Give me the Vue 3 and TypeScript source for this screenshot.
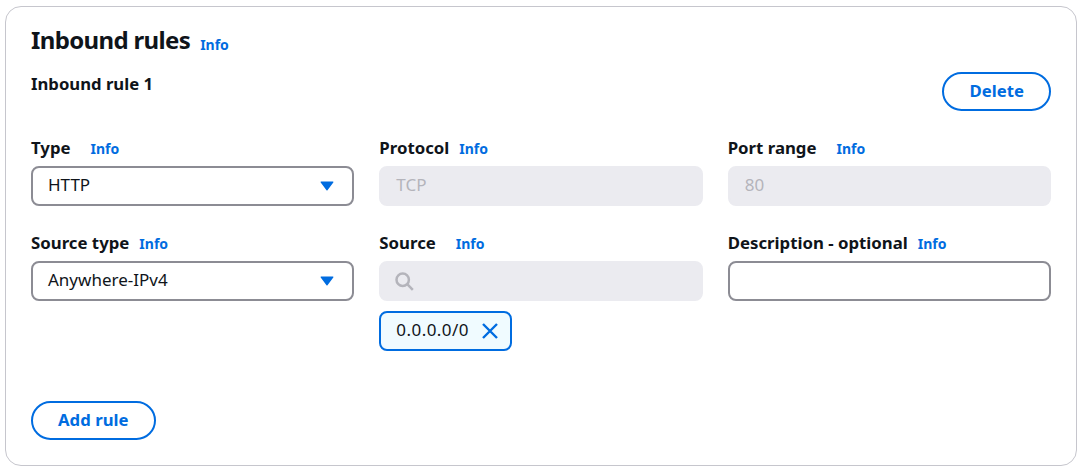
<script setup lang="ts">
// Second row of fields sits under the first, same grid
const infoLabel = 'Info';
</script>

<template>
  <div class="page">
    <section class="card">
      <header class="card-header">
        <h2 class="card-title">Inbound rules</h2>
        <a class="info-link">{{ infoLabel }}</a>
      </header>

      <div class="rule-header">
        <h3 class="rule-title">Inbound rule 1</h3>
        <button class="btn">Delete</button>
      </div>

      <div class="fields">
        <div class="field">
          <div class="field-label gap-wide"><span>Type</span><a class="info-link">{{ infoLabel }}</a></div>
          <div class="control select">
            <span class="value">HTTP</span>
            <svg class="caret" width="14" height="10" viewBox="0 0 14 10"><path d="M1.2 0.5h11.6a.6.6 0 0 1 .5 1L7.5 9.2a.6.6 0 0 1-1 0L.7 1.5a.6.6 0 0 1 .5-1z" fill="#006ce0" /></svg>
          </div>
        </div>
        <div class="field">
          <div class="field-label"><span>Protocol</span><a class="info-link">{{ infoLabel }}</a></div>
          <div class="control disabled"><span class="value">TCP</span></div>
        </div>
        <div class="field">
          <div class="field-label gap-wide"><span>Port range</span><a class="info-link">{{ infoLabel }}</a></div>
          <div class="control disabled"><span class="value">80</span></div>
        </div>

        <div class="field">
          <div class="field-label"><span>Source type</span><a class="info-link">{{ infoLabel }}</a></div>
          <div class="control select">
            <span class="value">Anywhere-IPv4</span>
            <svg class="caret" width="14" height="10" viewBox="0 0 14 10"><path d="M1.2 0.5h11.6a.6.6 0 0 1 .5 1L7.5 9.2a.6.6 0 0 1-1 0L.7 1.5a.6.6 0 0 1 .5-1z" fill="#006ce0" /></svg>
          </div>
        </div>
        <div class="field">
          <div class="field-label gap-wide"><span>Source</span><a class="info-link">{{ infoLabel }}</a></div>
          <div class="control disabled">
            <svg class="search-icon" width="20" height="20" viewBox="0 0 20 20" fill="none" stroke="#b4b4bb" stroke-width="2.5">
              <circle cx="8.7" cy="8.7" r="6.2" />
              <path d="M13.2 13.2l5.6 5.6" />
            </svg>
          </div>
          <div class="token">
            <span class="value">0.0.0.0/0</span>
            <svg width="18" height="18" viewBox="0 0 18 18" fill="none" stroke="#006ce0" stroke-width="2.4">
              <path d="M2 2l14 14M16 2L2 16" />
            </svg>
          </div>
        </div>
        <div class="field">
          <div class="field-label"><span>Description - optional</span><a class="info-link">{{ infoLabel }}</a></div>
          <div class="control"></div>
        </div>
      </div>

      <div class="card-footer">
        <button class="btn">Add rule</button>
      </div>
    </section>
  </div>
</template>

<style>
html,
body {
  margin: 0;
  background: #fff;
}
</style>

<style scoped>
.page {
  padding: 6px 7px 6px 5px;
  font-family: "Noto Sans", "Open Sans", sans-serif;
  color: #0f141a;
}

.card {
  box-sizing: border-box;
  height: 460px;
  padding: 16px 25px 25px;
  border: 1px solid #c6c6cd;
  border-radius: 16px;
  background: #fff;
}

.card-header {
  display: flex;
  align-items: flex-end;
  gap: 10px;
  height: 34px;
}

.card-header .info-link {
  margin-bottom: 2px;
}

.card-title {
  margin: 0;
  font-size: 24px;
  line-height: 34px;
  font-weight: 700;
  letter-spacing: -0.65px;
}

.info-link {
  font-size: 14px;
  line-height: 20px;
  font-weight: 700;
  color: #006ce0;
}

.rule-header {
  display: flex;
  justify-content: space-between;
  align-items: flex-start;
  height: 64px;
  margin-top: 15px;
}

.rule-title {
  margin: 0;
  font-size: 16.7px;
  line-height: 24px;
  font-weight: 700;
}

.btn {
  box-sizing: border-box;
  height: 39px;
  padding: 0 25px 2px;
  border: 2px solid #006ce0;
  border-radius: 20px;
  background: #fff;
  font-family: inherit;
  font-size: 16.7px;
  font-weight: 700;
  letter-spacing: 0.05px;
  color: #006ce0;
}

.fields {
  display: grid;
  grid-template-columns: repeat(3, 1fr);
  column-gap: 25px;
  row-gap: 25px;
}

.field {
  min-width: 0;
}

.field-label {
  display: flex;
  align-items: baseline;
  gap: 10px;
  height: 30px;
  font-size: 16.8px;
  line-height: 24px;
  font-weight: 700;
}

.gap-wide {
  gap: 20px;
}

.control {
  box-sizing: border-box;
  display: flex;
  align-items: center;
  height: 40px;
  padding: 0 15px;
  border: 2px solid #8c8c94;
  border-radius: 8px;
  background: #fff;
  font-size: 17px;
}

.value {
  padding-bottom: 4px;
}

.select {
  justify-content: space-between;
}

.caret {
  margin-right: 3px;
}

.disabled {
  border-color: #ebebf0;
  background: #ebebf0;
  color: #b4b4bb;
}

.search-icon {
  margin-left: -2px;
}

.token {
  box-sizing: border-box;
  display: inline-flex;
  align-items: center;
  gap: 12px;
  height: 40px;
  margin-top: 10px;
  padding: 0 11px 0 15px;
  border: 2px solid #006ce0;
  border-radius: 8px;
  background: #f0fbff;
  font-size: 17px;
  letter-spacing: 0.45px;
}

.card-footer {
  margin-top: 50px;
}
</style>
